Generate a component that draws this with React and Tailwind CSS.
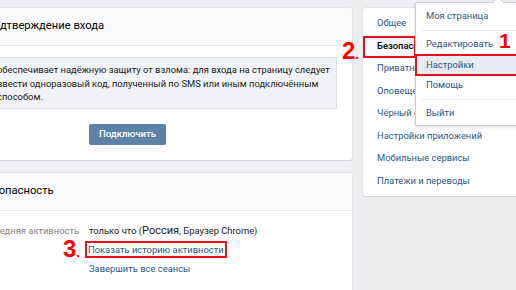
export default function App() {
  const navItems = [
    "Общее",
    "Безопасность",
    "Приватность",
    "Оповещения",
    "Чёрный список",
    "Настройки приложений",
    "Мобильные сервисы",
    "Платежи и переводы",
  ];
  return (
    <div className="relative w-[516px] h-[290px] overflow-hidden bg-[#edeef0] font-['Roboto','Liberation_Sans',sans-serif] text-[9.4px] text-black">
      <div className="flex gap-[11px] pt-[8px] ml-[-40px]">
        {/* left column */}
        <div className="w-[392px] shrink-0 flex flex-col gap-[13px]">
          <div className="h-[152px] bg-white rounded-[3px] shadow-[0_1px_0_0_#d7d8db,0_0_0_1px_#e3e4e8]">
            <div className="h-[38px] bg-[#fafbfc] border-b border-[#e7e8ec] rounded-t-[3px] pl-[26px] flex items-center text-[11.2px] text-black">
              Подтверждение входа
            </div>
            <div className="px-[15px] pt-[11px]">
              <div className="h-[52px] bg-[#f0f2f5] border border-[#dce1e6] pl-[21px] pt-[5px] leading-[13.5px] whitespace-nowrap text-[#222]">
                <div>обеспечивает надёжную защиту от взлома: для входа на страницу следует</div>
                <div>ввести одноразовый код, полученный по SMS или иным подключённым</div>
                <div>способом.</div>
              </div>
              <div className="mt-[15px] ml-[114px] w-[77px] h-[21px] rounded-[2px] bg-[#5e81a8] text-white text-[9.6px] font-medium flex items-center justify-center">
                Подключить
              </div>
            </div>
          </div>
          <div className="h-[140px] bg-white rounded-[3px] shadow-[0_1px_0_0_#d7d8db,0_0_0_1px_#e3e4e8]">
            <div className="h-[38px] bg-[#fafbfc] border-b border-[#e7e8ec] rounded-t-[3px] pl-[20px] flex items-center text-[11.2px] text-black">
              Безопасность
            </div>
            <div className="flex pt-[10px] leading-[19px]">
              <div className="w-[119px] shrink-0 text-right text-[#828282] whitespace-nowrap">
                Последняя активность
              </div>
              <div className="pl-[10px] flex flex-col">
                <div className="text-[#222] whitespace-nowrap">
                  только что (<span className="text-[11px]">Россия</span>, Браузер Chrome)
                </div>
                <div className="relative">
                  <span className="inline-block text-[#2a5885] leading-[13px] px-[1px] outline-2 outline-[#e8101a] ml-[-2px] mt-[2px] whitespace-nowrap">
                    Показать историю активности
                  </span>
                  <span className="absolute left-[-26px] top-[-3px] font-['Liberation_Sans',sans-serif] font-bold text-[#f00] text-[24px] leading-[24px]">
                    3<span className="text-[14px]">.</span>
                  </span>
                </div>
                <div className="text-[#2a5885] whitespace-nowrap">Завершить все сеансы</div>
              </div>
            </div>
          </div>
        </div>
        {/* right column */}
        <div className="w-[200px] shrink-0">
          <div className="h-[188px] bg-white rounded-[3px] shadow-[0_1px_0_0_#d7d8db,0_0_0_1px_#e3e4e8] py-[4px]">
            {navItems.map((t, i) => (
              <div
                key={t}
                className={
                  i === 1
                    ? "relative h-[22.5px] flex items-center pl-[14px] text-black font-medium bg-[#f5f7fa] whitespace-nowrap"
                    : "h-[22.5px] flex items-center pl-[14px] text-[#2a5885] whitespace-nowrap"
                }
              >
                {t}
                {i === 1 && (
                  <div className="absolute left-0 top-[1px] w-[53px] h-[22px] border-2 border-[#e8101a]"></div>
                )}
              </div>
            ))}
          </div>
        </div>
      </div>

      {/* red 2. */}
      <div className="absolute left-[342px] top-[39px] font-['Liberation_Sans',sans-serif] font-bold text-[#f00] text-[24px] leading-[24px]">
        2<span className="text-[14px]">.</span>
      </div>

      {/* dropdown */}
      <div className="absolute left-[415px] top-[2px] w-[130px] h-[124px] bg-white border border-[#c5d0db] rounded-[2px] shadow-[0_1px_3px_rgba(0,0,0,0.15)] pt-[3px]">
        <div className="absolute left-[78px] top-[-5px] w-[8px] h-[8px] bg-white border-l border-t border-[#c5d0db] rotate-45"></div>
        <div className="h-[21px] flex items-center pl-[10px] text-[#2a5885]">Моя страница</div>
        <div className="h-[7px] flex items-center pl-[6px]"><div className="h-px w-full bg-[#e7e8ec]"></div></div>
        <div className="h-[21px] flex items-center pl-[10px] text-[#2a5885]">Редактировать</div>
        <div className="h-[20px] flex items-center pl-[10px] text-[#2a5885] bg-[#e5ebf1] outline-2 outline-[#e8101a] -outline-offset-1">Настройки</div>
        <div className="h-[21px] flex items-center pl-[10px] text-[#2a5885]">Помощь</div>
        <div className="h-[7px] flex items-center pl-[6px]"><div className="h-px w-full bg-[#e7e8ec]"></div></div>
        <div className="h-[21px] flex items-center pl-[10px] text-[#2a5885]">Выйти</div>
      </div>

      {/* red 1 */}
      <div className="absolute left-[499px] top-[30px] font-['Liberation_Sans',sans-serif] font-bold text-[#f00] text-[21px] leading-[21px]">
        1
      </div>
    </div>
  );
}
